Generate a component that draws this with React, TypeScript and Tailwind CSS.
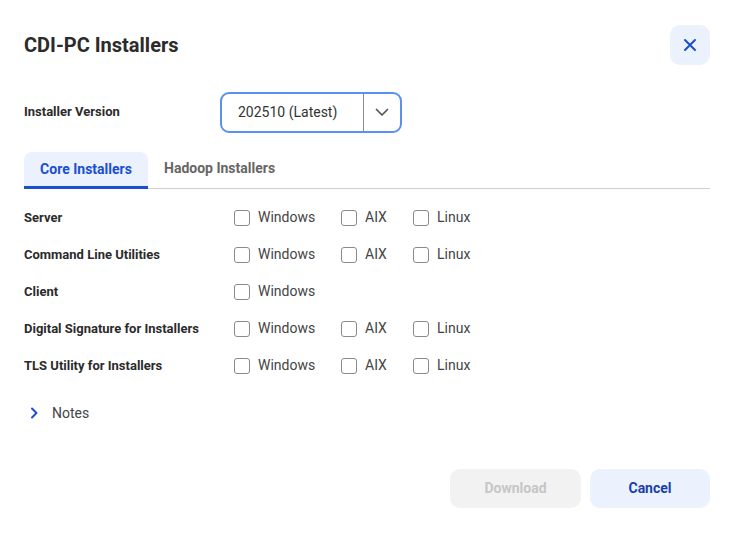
import React from "react";

const Check = ({ label }: { label: string }) => (
  <label className="flex items-center gap-[8px]">
    <span className="w-[16px] h-[16px] rounded-[3px] border border-[#8a8a8a] bg-white" />
    <span className="text-[14px] text-[#444]">{label}</span>
  </label>
);

const rows: { name: string; opts: string[] }[] = [
  { name: "Server", opts: ["Windows", "AIX", "Linux"] },
  { name: "Command Line Utilities", opts: ["Windows", "AIX", "Linux"] },
  { name: "Client", opts: ["Windows"] },
  { name: "Digital Signature for Installers", opts: ["Windows", "AIX", "Linux"] },
  { name: "TLS Utility for Installers", opts: ["Windows", "AIX", "Linux"] },
];

export default function App() {
  return (
    <div
      className="w-[735px] h-[535px] bg-white pl-[24px] pr-[25px] pt-[25px] text-[#333]"
      style={{ fontFamily: "Roboto, 'Noto Sans', sans-serif" }}
    >
      <div className="flex items-center justify-between h-[40px]">
        <h1 className="text-[20px] font-bold text-[#2b2b2b]">CDI-PC Installers</h1>
        <button className="w-[40px] h-[40px] rounded-[10px] bg-[#ebf1fd] flex items-center justify-center">
          <svg width="14" height="14" viewBox="0 0 14 14" fill="none">
            <path d="M2 2L12 12M12 2L2 12" stroke="#1a4fcf" strokeWidth="2" strokeLinecap="round" />
          </svg>
        </button>
      </div>

      <div className="flex items-center mt-[27px] h-[40px]">
        <div className="w-[196px] text-[13px] font-bold text-[#2b2b2b]">Installer Version</div>
        <div className="w-[182px] h-[41px] rounded-[9px] border-2 border-[#5b8ff2] flex items-center">
          <div className="flex-1 pl-[16px] text-[14px] text-[#333]">202510 (Latest)</div>
          <div className="w-px h-full bg-[#8a8a8a]" />
          <div className="w-[36px] flex items-center justify-center">
            <svg width="14" height="9" viewBox="0 0 14 9" fill="none">
              <path d="M1.5 1.5L7 7L12.5 1.5" stroke="#555" strokeWidth="1.7" strokeLinecap="round" strokeLinejoin="round" />
            </svg>
          </div>
        </div>
      </div>

      <div className="mt-[20px] flex border-b border-[#cfcfcf] h-[37px]">
        <div className="w-[124px] bg-[#ebf1fd] rounded-t-[8px] border-b-[3px] border-[#1a4fcf] flex items-center justify-center text-[14px] font-bold text-[#1a4fcf] -mb-px">
          Core Installers
        </div>
        <div className="px-[16px] pb-[3px] flex items-center text-[14px] font-bold text-[#666]">Hadoop Installers</div>
      </div>

      <div className="mt-[10px] flex flex-col">
        {rows.map((r) => (
          <div key={r.name} className="flex items-center h-[37px]">
            <div className="w-[210px] text-[13px] font-bold text-[#2b2b2b]">{r.name}</div>
            <div className="w-[107px]"><Check label={r.opts[0]} /></div>
            {r.opts[1] && <div className="w-[72px]"><Check label={r.opts[1]} /></div>}
            {r.opts[2] && <div><Check label={r.opts[2]} /></div>}
          </div>
        ))}
      </div>

      <div className="mt-[17px] flex items-center h-[24px] pl-[5px]">
        <svg width="10" height="12" viewBox="0 0 10 12" fill="none">
          <path d="M3 1.5L7.5 6L3 10.5" stroke="#1a4fcf" strokeWidth="2" strokeLinecap="round" strokeLinejoin="round" />
        </svg>
        <span className="ml-[13px] text-[14px] text-[#444]">Notes</span>
      </div>

      <div className="mt-[44px] flex justify-end gap-[9px]">
        <button className="w-[131px] h-[39px] rounded-[10px] bg-[#f2f2f2] text-[14px] font-bold text-[#c6c6c6]">Download</button>
        <button className="w-[120px] h-[39px] rounded-[10px] bg-[#ebf1fd] text-[14px] font-bold text-[#1a3fa8]">Cancel</button>
      </div>
    </div>
  );
}
